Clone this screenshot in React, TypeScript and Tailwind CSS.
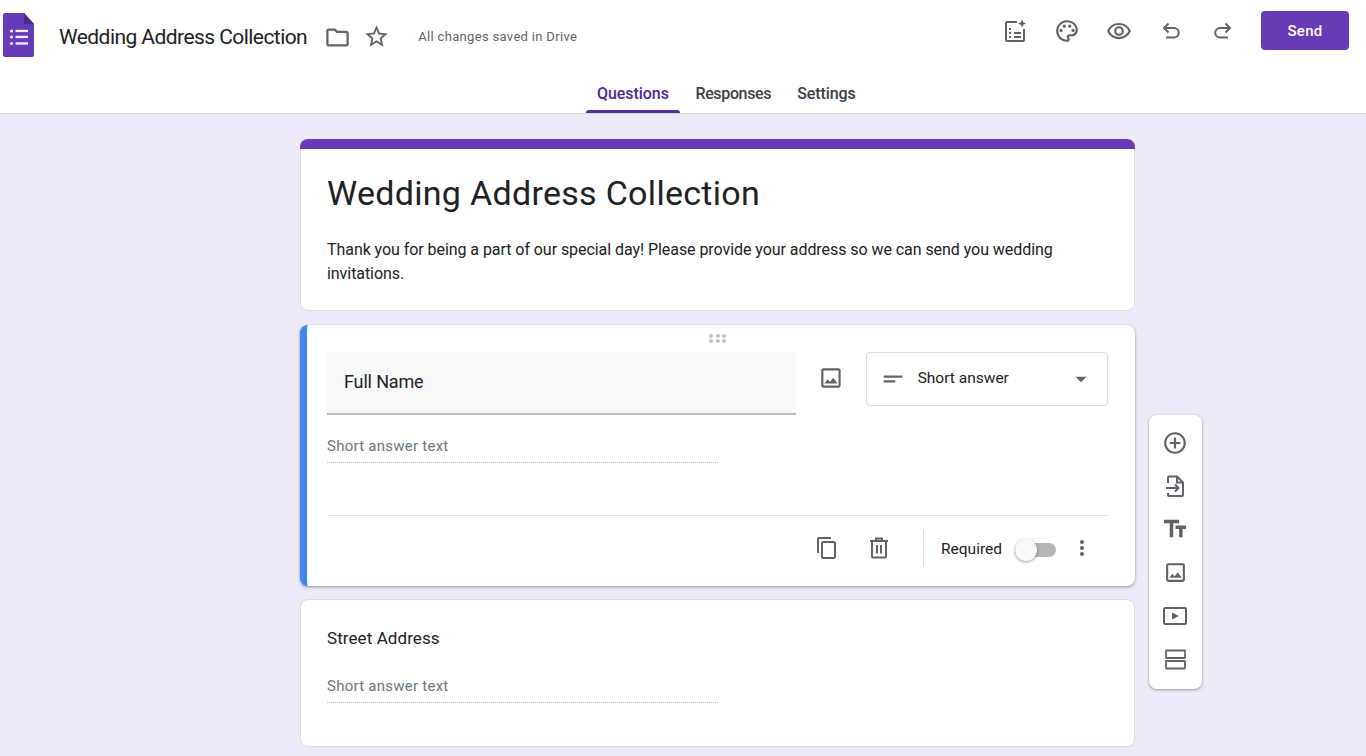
import {
  MdAddCircleOutline,
  MdArrowDropDown,
  MdContentCopy,
  MdMoreVert,
  MdOutlineFolder,
  MdOutlineImage,
  MdOutlineRemoveRedEye,
  MdOutlinePalette,
  MdShortText,
  MdStarBorder,
  MdTextFields,
} from 'react-icons/md';

function FormsLogo() {
  return (
    <svg width="31" height="44" viewBox="0 0 31 44" className="shrink-0">
      <path d="M2 0h19l10 11v31a2 2 0 0 1-2 2H2a2 2 0 0 1-2-2V2a2 2 0 0 1 2-2z" fill="#673ab7" />
      <path d="M21 0l10 11H21z" fill="#4b2a8a" />
      <g fill="#f3eefb">
        <circle cx="8.500" cy="18" r="1.600" />
        <circle cx="8.500" cy="24" r="1.600" />
        <circle cx="8.500" cy="30.500" r="1.600" />
        <rect x="12.500" y="16.800" width="12.500" height="2.300" />
        <rect x="12.500" y="22.800" width="12.500" height="2.300" />
        <rect x="12.500" y="29.300" width="12.500" height="2.300" />
      </g>
    </svg>
  );
}

function CustomizeIcon() {
  return (
    <svg width="24" height="24" viewBox="0 0 24 24" fill="none" stroke="#5f6368" strokeWidth="2">
      <path d="M14 3H4a1 1 0 0 0-1 1v17a1 1 0 0 0 1 1h16a1 1 0 0 0 1-1V10" />
      <path d="M19 0.500l1.200 2.800L23 4.500l-2.800 1.200L19 8.500l-1.200-2.800L15 4.500l2.800-1.200z" fill="#5f6368" stroke="none" />
      <path d="M6 10h2M6 14h2M6 18h2M11 14h7M11 18h7" />
    </svg>
  );
}

function UndoIcon({ flip }: { flip?: boolean }) {
  return (
    <svg
      width="24"
      height="24"
      viewBox="0 0 24 24"
      fill="none"
      stroke="#5f6368"
      strokeWidth="2"
      className={flip ? '-scale-x-100' : ''}
    >
      <path d="M9.500 4.500L5 9l4.500 4.500" />
      <path d="M5 9h10a4.500 4.500 0 0 1 0 9.500H7" />
    </svg>
  );
}

function ImportIcon() {
  return (
    <svg width="24" height="24" viewBox="0 0 24 24" fill="none" stroke="#5f6368" strokeWidth="2">
      <path d="M5 9V3.500A1 1 0 0 1 6 2.500h8l6 6V21a1 1 0 0 1-1 1H6a1 1 0 0 1-1-1v-2" />
      <path d="M14 2.500V8.500h6" />
      <path d="M3 14h12M12 10.500l3.500 3.500-3.500 3.500" />
    </svg>
  );
}

function TrashIcon() {
  return (
    <svg width="24" height="24" viewBox="0 0 24 24" fill="none" stroke="#5f6368" strokeWidth="2">
      <path d="M3 5h18M9 5V2.500h6V5" />
      <path d="M5 5v15.500a1 1 0 0 0 1 1h12a1 1 0 0 0 1-1V5" />
      <path d="M10 9v8.500M14 9v8.500" />
    </svg>
  );
}

function VideoIcon() {
  return (
    <svg width="26" height="24" viewBox="0 0 26 24" fill="none" stroke="#5f6368" strokeWidth="2">
      <rect x="2" y="4" width="22" height="16" rx="1" />
      <path d="M10 8.500l7 3.500-7 3.500z" fill="#5f6368" stroke="none" />
    </svg>
  );
}

function SectionIcon() {
  return (
    <svg width="24" height="24" viewBox="0 0 24 24" fill="none" stroke="#5f6368" strokeWidth="1.800">
      <rect x="3" y="2.500" width="19" height="7.500" rx="0.5" />
      <rect x="3" y="13" width="19" height="7.500" rx="0.5" />
    </svg>
  );
}

function Header() {
  return (
    <header className="h-[114px] shrink-0 border-b border-[#dadce0] bg-white flex flex-col">
      <div className="h-[73px] flex items-start pl-[3px] pr-[17px]">
        <div className="mt-[13px]">
          <FormsLogo />
        </div>
        <h1 className="ml-[25px] mt-[22px] text-[21px] leading-[30px] tracking-[-0.56px] text-[#202124]">
          Wedding Address Collection
        </h1>
        <MdOutlineFolder className="ml-[17px] mt-[24px] text-[#5f6368]" size={27} />
        <MdStarBorder className="ml-[12px] mt-[23px] text-[#5f6368]" size={27} />
        <span className="ml-[28px] mt-[28px] text-[13px] leading-[18px] tracking-[0.33px] text-[#5f6368]">
          All changes saved in Drive
        </span>
        <div className="ml-auto mt-[11px] flex items-center">
          <div className="flex items-center mr-[12px] text-[#5f6368]">
            <div className="w-[52px] flex justify-center"><CustomizeIcon /></div>
            <div className="w-[52px] flex justify-center"><MdOutlinePalette size={26} /></div>
            <div className="w-[52px] flex justify-center"><MdOutlineRemoveRedEye size={26} /></div>
            <div className="w-[52px] flex justify-center"><UndoIcon /></div>
            <div className="w-[52px] flex justify-center"><UndoIcon flip /></div>
          </div>
          <button className="w-[88px] h-[39px] pt-px rounded bg-[#673ab7] text-white text-[15px] tracking-[0.3px] font-medium">
            Send
          </button>
        </div>
      </div>
      <nav className="flex-1 flex justify-center pl-[76px] text-[16px] text-[#3c4043] font-medium">
        <div className="relative w-[94px] flex justify-center pt-[9px] pr-px text-[#4a2b8f] tracking-[-0.05px]">
          Questions
          <div className="absolute bottom-0 left-0 right-0 h-[3px] rounded-t bg-[#4f2d9b]" />
        </div>
        <div className="ml-[15px] pt-[9px] tracking-[-0.35px]">Responses</div>
        <div className="ml-[26px] pt-[9px] tracking-[-0.1px]">Settings</div>
      </nav>
    </header>
  );
}

function TitleCard() {
  return (
    <section className="h-[172px] shrink-0 rounded-lg overflow-hidden flex flex-col">
      <div className="h-[10px] shrink-0 bg-[#673ab7]" />
      <div className="flex-1 bg-white border-x border-b border-[#dadce0] rounded-b-lg px-[26px]">
        <h2 className="mt-[23px] text-[34px] leading-[42px] tracking-[0.3px] text-[#202124]">
          Wedding Address Collection
        </h2>
        <p className="mt-[24px] text-[16px] leading-[24px] tracking-[-0.06px] text-[#202124]">
          Thank you for being a part of our special day! Please provide your address so we can send you wedding
          invitations.
        </p>
      </div>
    </section>
  );
}

function ShortAnswerLine() {
  return (
    <div className="w-[391px] border-b border-dotted border-[#bdc1c6] pb-[5px] text-[15px] leading-[21px] tracking-[0.25px] text-[#70757a]">
      Short answer text
    </div>
  );
}

function ActiveQuestion() {
  return (
    <section className="relative h-[261px] shrink-0 rounded-lg bg-white overflow-hidden border-l-[7px] border-[#4285f4] shadow-[0_1px_3px_rgba(60,64,67,0.55)]">
      <div className="pl-[20px] pr-[27px]">
        <div className="h-[27px] flex justify-center items-center">
          <div className="grid grid-cols-3 gap-x-[2.5px] gap-y-[1.5px]">
            {[0, 1, 2, 3, 4, 5].map((i) => (
              <span key={i} className="w-[4px] h-[4px] rounded-full bg-[#bdc1c6]" />
            ))}
          </div>
        </div>
        <div className="flex items-start">
          <div className="w-[470px] h-[63px] bg-[#f8f9fa] border-b-2 border-[#bdbdbd] pl-[17px] pt-[18px] text-[18px] leading-[24px] tracking-[-0.15px] text-[#202124]">
            Full Name
          </div>
          <MdOutlineImage size={26} className="ml-[22px] mt-[13px] text-[#5f6368]" />
          <div className="ml-[22px] w-[243px] h-[54px] rounded border border-[#dadce0] flex items-center pl-[12px] pr-[13px]">
            <MdShortText size={28} className="text-[#5f6368]" />
            <span className="ml-[11px] text-[15.5px] text-[#202124]">Short answer</span>
            <MdArrowDropDown size={26} className="ml-auto text-[#5f6368]" />
          </div>
        </div>
        <div className="mt-[21px]">
          <ShortAnswerLine />
        </div>
        <div className="mt-[52px] h-px bg-[#e3e4e6]" />
        <div className="flex items-center justify-end h-[64px] pr-[14px]">
          <MdContentCopy size={24} className="text-[#5f6368]" />
          <div className="ml-[28px]"><TrashIcon /></div>
          <div className="ml-[32px] h-[36px] w-px bg-[#e0e0e0]" />
          <span className="ml-[17px] mt-[3px] text-[15.5px] text-[#202124]">Required</span>
          <div className="relative ml-[13px] mt-[3px] w-[41px] h-[14px] rounded-full bg-[#b5b5b5]">
            <span className="absolute left-0 -top-[4px] w-[22px] h-[22px] rounded-full bg-[#fafafa] shadow-[0_1px_3px_rgba(0,0,0,0.4)]" />
          </div>
          <MdMoreVert size={24} className="ml-[14px] text-[#5f6368]" />
        </div>
      </div>
    </section>
  );
}

function Question({ title }: { title: string }) {
  return (
    <section className="h-[148px] shrink-0 rounded-lg bg-white border border-[#dadce0] px-[26px] pt-[27px]">
      <h3 className="text-[17px] leading-[22px] tracking-[0.08px] text-[#202124]">{title}</h3>
      <div className="mt-[27px]">
        <ShortAnswerLine />
      </div>
    </section>
  );
}

function SideToolbar() {
  const cell = 'h-[43.4px] flex items-center justify-center';
  return (
    <aside className="w-[53px] h-[274px] mt-[276px] ml-[14px] shrink-0 rounded-lg bg-white shadow-[0_1px_3px_rgba(60,64,67,0.5)] flex flex-col pt-[6px] pr-px text-[#5f6368]">
      <div className={cell}><MdAddCircleOutline size={26} /></div>
      <div className={cell}><ImportIcon /></div>
      <div className={cell}><MdTextFields size={28} /></div>
      <div className={cell}><MdOutlineImage size={25} /></div>
      <div className={cell}><VideoIcon /></div>
      <div className={cell}><SectionIcon /></div>
    </aside>
  );
}

export default function App() {
  return (
    <div className="h-[756px] overflow-hidden bg-[#eeeaf8] flex flex-col font-['Roboto',sans-serif]">
      <Header />
      <main className="flex pl-[300px] pt-[25px]">
        <div className="w-[835px] flex flex-col">
          <TitleCard />
          <div className="mt-[14px]">
            <ActiveQuestion />
          </div>
          <div className="mt-[13px]">
            <Question title="Street Address" />
          </div>
        </div>
        <SideToolbar />
      </main>
    </div>
  );
}
